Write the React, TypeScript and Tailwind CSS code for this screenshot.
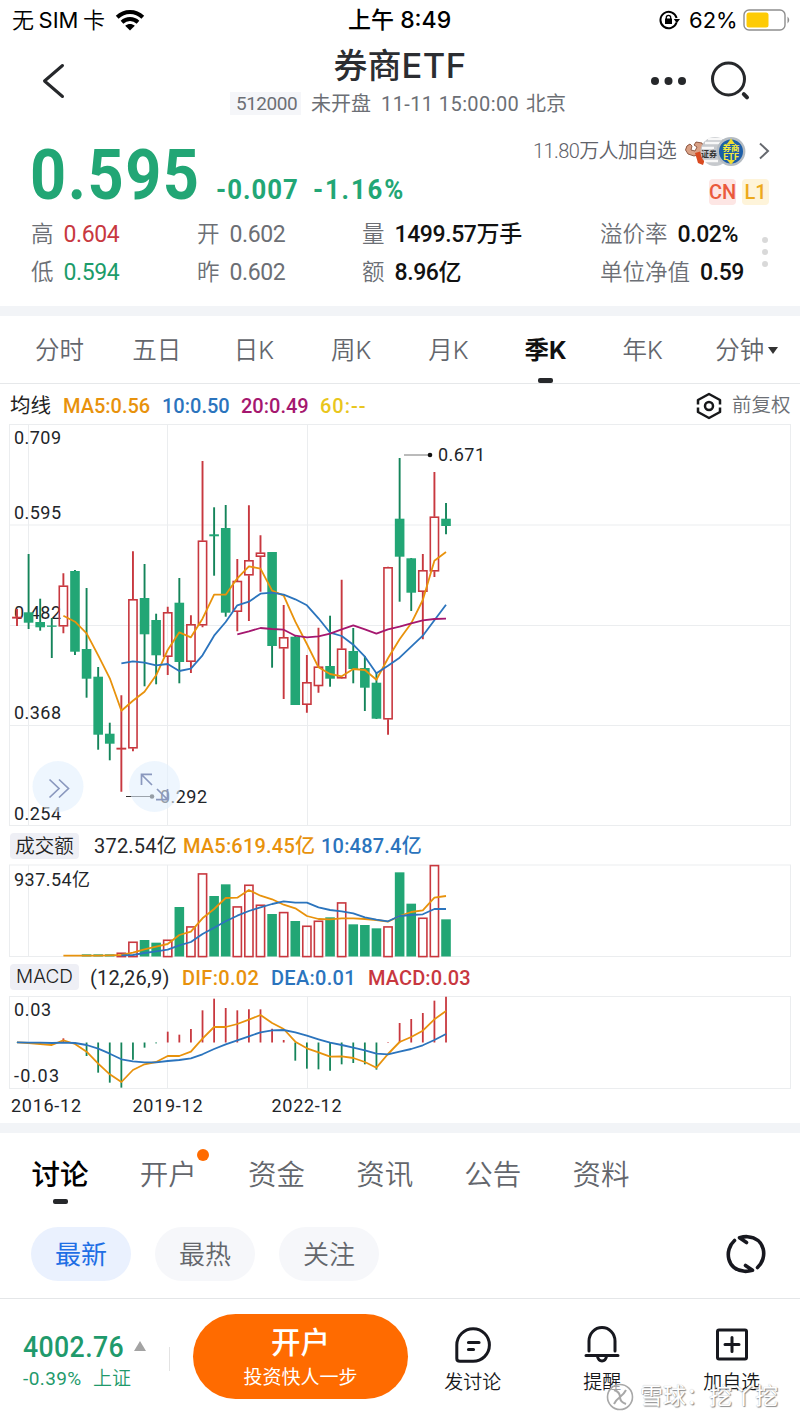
import type { ReactNode } from "react"

type Candle = [high: number, low: number, top: number, bottom: number, up: 0 | 1]

// high, low, body top, body bottom, up (red) or down (green)
const CANDLES: Candle[] = [
  [609, 626, 617, 618, 1], [554, 629, 612.3, 622.7, 0], [598.7, 630.7, 622, 627.3, 0], [618, 658, 625.5, 626.8, 0],
  [573.3, 633.3, 585.7, 626.3, 1], [570, 655, 571, 651.7, 0], [588, 697.7, 649, 678.7, 0], [667, 749.7, 676.7, 734.7, 0],
  [722.7, 760.3, 733.7, 743.7, 0], [695.3, 791.7, 748, 748.8, 1], [551.3, 751.3, 599.3, 748.3, 1], [564, 686.3, 598, 634.3, 0],
  [613.7, 684.3, 620, 655.3, 0], [606.7, 675, 612.3, 656.7, 1], [578, 683.3, 602.7, 662, 0], [615.3, 673, 624.3, 661.7, 1],
  [461, 627.3, 540.7, 625.3, 1], [507.3, 575.7, 534.3, 536.3, 0], [505, 616.7, 528, 612.7, 0], [559, 631.3, 581, 611.7, 1],
  [505.3, 621, 560.3, 575.3, 1], [535.3, 591.7, 552.7, 556.7, 1], [552, 667.7, 552, 646, 0], [605, 699, 637.3, 648.3, 1],
  [636, 705, 636.7, 705, 0], [655, 712.7, 682.3, 704.7, 1], [627.7, 692.7, 666.7, 686, 1], [615.7, 686.7, 666, 678.7, 0],
  [579.7, 678.7, 648.7, 678.3, 1], [628, 683.3, 651, 669, 0], [656, 711, 668, 687.7, 0], [672, 719, 682.7, 718.7, 0],
  [566.7, 734.7, 567.3, 719.3, 1], [458, 601.7, 518.7, 556.7, 0], [558, 611, 558.3, 592.7, 0], [554, 639.3, 570.3, 591.7, 1],
  [472, 577, 516.7, 571.3, 1], [503, 534.3, 518.7, 526, 0],
]

const MA5 = [587, 605, 640, 706, 775, 872, 842, 815, 766, 690, 637, 652, 596, 524, 524, 475, 439, 446, 512, 527, 605, 672, 742, 762, 769, 747, 750, 779, 715, 658, 610, 540, 422, 396]
const MA10 = [730, 724, 728, 736, 732, 753, 746, 706, 647, 606, 556, 545, 521, 518, 524, 538, 556, 595, 638, 648, 674, 710, 760, 737, 713, 680, 647, 601, 554]
const MA20 = [643, 634, 624, 627, 629, 647, 652, 649, 641, 628, 616, 628, 641, 628, 620, 610, 601, 597, 596]

const VOL = [373, 373, 373, 368, 335, 330, 338, 329, 231, 289, 130, 198, 163, 229, 164, 224, 252, 246, 273, 287, 272, 262, 217, 283, 285, 295, 289, 127, 221, 263, 105, 268]
const VOL5 = [377, 377, 377, 377, 376, 375, 368, 358, 350, 342, 315, 305, 265, 237, 204, 203, 180, 197, 208, 224, 235, 258, 267, 268, 265, 265, 267, 270, 275, 258, 246, 241, 203, 198]
const VOL10 = [376, 375, 369, 364, 359, 346, 336, 312, 293, 274, 257, 243, 232, 222, 214, 218, 218, 232, 240, 244, 250, 262, 269, 274, 258, 255, 253, 237, 237]

const HIST = [637, 637, 637, 637, 625, 637, 678, 728, 758, 773, 689, 653, 640, 605, 614, 597, 541, 506, 534, 541, 538, 538, 596, 630, 692, 716, 718, 722, 703, 699, 703, 719, 636, 579, 567, 549, 512, 500]
const DIF = [637, 639, 642, 645, 631, 642, 665, 701, 733, 756, 720, 703, 696, 678, 678, 665, 626, 591, 591, 582, 569, 555, 579, 597, 635, 655, 667, 680, 679, 684, 696, 713, 672, 636, 621, 602, 568, 543]
const DEA = [637, 638, 638, 639, 638, 639, 645, 656, 671, 688, 694, 697, 697, 693, 690, 685, 673, 657, 643, 631, 619, 607, 601, 600, 607, 617, 628, 638, 645, 653, 661, 671, 673, 665, 657, 646, 630, 612]

const RED = "#c8383f"
const GREEN = "#22a675"
const GREEN_DARK = "#14845a"
const ORANGE = "#e8920c"
const BLUE = "#2b74bd"
const PURPLE = "#a5176f"
const GRID = "#ebedef"

const px = (i: number) => 17 + i * 11.595
const line = (data: number[], start: number, base: number) =>
  data.map((v, i) => `${px(i + start).toFixed(1)},${(base + v / 3).toFixed(1)}`).join(" ")

function Line({ data, start, base, color }: { data: number[]; start: number; base: number; color: string }) {
  return <polyline points={line(data, start, base)} fill="none" stroke={color} strokeWidth={1.8} strokeLinejoin="round" />
}

function Frame({ top, bottom, rows = [] }: { top: number; bottom: number; rows?: number[] }) {
  return (
    <g stroke={GRID} fill="none">
      <rect x={9.5} y={top} width={781} height={bottom - top} />
      {rows.map((y) => <path key={y} d={`M9.5 ${y}H790.5`} />)}
      {[28.5, 167.5, 307.5].map((x) => <path key={x} d={`M${x} ${top}V${bottom}`} />)}
    </g>
  )
}

function Label({ x, y, w, children }: { x: number; y: number; w: number; children: ReactNode }) {
  return (
    <text x={x} y={y} textLength={w} lengthAdjust="spacing" fontSize={18} fill="#222529" className="font-[Roboto,'Noto_Sans_CJK_SC',sans-serif]">
      {children}
    </text>
  )
}

function PriceChart() {
  return (
    <svg className="block" width={800} height={406} viewBox="0 422 800 406">
      <Frame top={424.5} bottom={825.5} rows={[525, 625.5, 725.5]} />
      <Label x={14} y={444} w={47}>0.709</Label>
      <Label x={14} y={519} w={47}>0.595</Label>
      <Label x={14} y={619} w={47}>0.482</Label>
      <Label x={14} y={719} w={47}>0.368</Label>
      <Label x={14} y={819.5} w={47}>0.254</Label>
      {CANDLES.map(([high, low, top, bottom, up], i) => (
        <g key={i}>
          {up ? (
            <>
              <path d={`M${px(i)} ${high}V${top}M${px(i)} ${bottom}V${low}`} stroke={RED} strokeWidth={1.9} />
              <rect x={px(i) - 4.1} y={top + 0.5} width={8.2} height={Math.max(bottom - top - 1, 0.3)} fill="none" stroke={RED} strokeWidth={1.6} />
            </>
          ) : (
            <>
              <path d={`M${px(i)} ${high}V${low}`} stroke={GREEN_DARK} strokeWidth={1.9} />
              <rect x={px(i) - 4.8} y={top} width={9.6} height={bottom - top} fill={GREEN} />
            </>
          )}
        </g>
      ))}
      <Line data={MA5} start={4} base={420} color={ORANGE} />
      <Line data={MA10} start={9} base={420} color={BLUE} />
      <Line data={MA20} start={19} base={420} color={PURPLE} />
      <path d="M404 455H430" stroke="#777" />
      <circle cx={430} cy={455} r={2.3} fill="#111" />
      <Label x={438} y={461} w={47}>0.671</Label>
      <path d="M126 796.5H152" stroke="#333" />
      <circle cx={152} cy={796.5} r={2.3} fill="#222" />
      <Label x={160} y={803} w={47}>0.292</Label>
      <circle cx={58} cy={786.5} r={25.5} fill="#e2f0fd" fillOpacity={0.6} />
      <circle cx={154.5} cy={786.5} r={25.5} fill="#e2f0fd" fillOpacity={0.6} />
      <g fill="none" stroke="#8a98be" strokeWidth={1.7}>
        <path d="M49.5 779.5L59 788.5L49.5 797.5M59 779.5L68.5 788.5L59 797.5" />
        <path d="M152 785L141.5 774.5M141.5 785V774.3H152M157 789L167.5 799.5M167.5 789V799.7H156" />
      </g>
    </svg>
  )
}

function VolumeChart() {
  return (
    <svg className="block" width={800} height={96} viewBox="0 862 800 96">
      <Frame top={865} bottom={956.5} />
      <Label x={14} y={886} w={76}>937.54亿</Label>
      {VOL.map((v, n) => {
        const i = n + 6
        const y = 830 + v / 3
        return CANDLES[i][4] ? (
          <rect key={i} x={px(i) - 4.1} y={y + 0.6} width={8.2} height={956 - y} fill="none" stroke={RED} strokeWidth={1.6} />
        ) : (
          <rect key={i} x={px(i) - 4.8} y={y} width={9.6} height={956.5 - y} fill={GREEN} />
        )
      })}
      <Line data={VOL5} start={4} base={830} color={ORANGE} />
      <Line data={VOL10} start={9} base={830} color={BLUE} />
    </svg>
  )
}

function MacdChart() {
  return (
    <svg className="block" width={800} height={129} viewBox="0 994 800 129">
      <Frame top={996.5} bottom={1088.5} />
      {HIST.map((v, i) => (
        <path key={i} d={`M${px(i)} 1042.5V${830 + v / 3}`} stroke={v < 637 ? RED : GREEN_DARK} strokeWidth={1.8} />
      ))}
      <Line data={DIF} start={0} base={830} color={ORANGE} />
      <Line data={DEA} start={0} base={830} color={BLUE} />
      <Label x={14} y={1016} w={37}>0.03</Label>
      <Label x={14} y={1082} w={45}>-0.03</Label>
      <Label x={11} y={1112} w={70}>2016-12</Label>
      <Label x={132.5} y={1112} w={70}>2019-12</Label>
      <Label x={271.5} y={1112} w={70}>2022-12</Label>
    </svg>
  )
}

function StatusBar() {
  return (
    <div className="flex h-10 items-center text-black">
      <div className="flex w-[348px] items-center pl-3 text-[22px]">
        <span className="flex w-[103px] font-[Inter,'Noto_Sans_CJK_SC',sans-serif] font-[350]">
          无<span className="w-[49px] text-center font-normal">SIM</span>卡
        </span>
        <svg width={30} height={22} viewBox="0 0 30 22" fill="none" stroke="#000" strokeWidth={4}>
          <path d="M2.2 8.3C9.5 1.2 20.5 1.2 27.8 8.3" />
          <path d="M7 13.2C11.6 9 18.4 9 23 13.2" />
          <path d="M15 21.5L10.2 16.7C13 14.3 17 14.3 19.8 16.7Z" fill="#000" stroke="none" />
        </svg>
      </div>
      <div className="w-[311px] font-[Inter,'Noto_Sans_CJK_SC',sans-serif] text-[23px] font-medium">上午 8:49</div>
      <svg width={21} height={20} viewBox="0 0 21 20" fill="none" stroke="#000" strokeWidth={2}>
        <path d="M17.5 12.5A8.2 8.2 0 1 1 17.6 8" />
        <path d="M14.8 9H21L17.8 13.2Z" fill="#000" stroke="none" />
        <rect x={6} y={8.5} width={7} height={5.5} fill="#000" stroke="none" />
        <path d="M7.3 9V7.6A2.2 2.2 0 0 1 11.7 7.6V9" strokeWidth={1.3} />
      </svg>
      <span className="ml-[9px] w-[54px] font-[Inter,sans-serif] text-[22px]">62%</span>
      <svg width={48} height={22} viewBox="0 0 48 22">
        <rect x={1} y={1} width={41} height={20} rx={5} fill="none" stroke="#8e8e8e" strokeWidth={1.4} />
        <rect x={3.5} y={3.5} width={22} height={15} rx={2.5} fill="#fecb05" />
        <path d="M44.5 7.5Q48 11 44.5 14.5Z" fill="#8e8e8e" />
      </svg>
    </div>
  )
}

function Header() {
  return (
    <div className="flex h-[82px] text-[#2b2d31]">
      <svg className="mt-[22px] ml-[40px] w-[190px]" width={190} height={40} viewBox="40 62 190 40" fill="none" stroke="#26282b" strokeWidth={3} strokeLinecap="round" strokeLinejoin="round">
        <path d="M62.5 65.5L44.5 81L62.5 96.5" />
      </svg>
      <div className="w-[340px] text-center">
        <h1 className="h-[52px] pt-0.5 text-[34px] leading-[48px] font-medium">
          券商<span className="font-[Inter,sans-serif] text-[34.5px] tracking-[0.5px]">ETF</span>
        </h1>
        <div className="flex h-[23px] items-center text-[20px] leading-none text-[#6c6f75]">
          <span className="h-[23px] w-[71px] bg-[#f5f6f9] pl-[6px] text-left text-[19px] leading-[24px] tracking-[-0.5px]">512000</span>
          <span className="w-[70px] pl-[10px] text-left">未开盘</span>
          <span className="w-[145px] pl-[10px] text-left whitespace-nowrap tracking-[0.4px]">11-11 15:00:00</span>
          <span className="pl-[10px]">北京</span>
        </div>
      </div>
      <svg className="mt-[18px] ml-[78px]" width={110} height={46} viewBox="648 58 110 46" fill="none" stroke="#26282b">
        <g fill="#26282b" stroke="none">
          <circle cx={655} cy={81} r={4} />
          <circle cx={668.5} cy={81} r={4} />
          <circle cx={682} cy={81} r={4} />
        </g>
        <circle cx={728.5} cy={79} r={16} strokeWidth={3} />
        <path d="M743.8 94.2L747 97.4" strokeWidth={4} strokeLinecap="round" />
      </svg>
    </div>
  )
}

function Avatars() {
  return (
    <svg className="ml-[9px]" width={61} height={30} viewBox="685 135 61 30">
      <path d="M685.5 149Q686 144 690 143L692 145L691 149L695 150L697 146L694 144L696 141L702 142L704 148L701 153L694 155L688 153Z" fill="#d9a186" stroke="#7a3f28" strokeWidth={0.8} />
      <path d="M695 152L702 150L705 158L703 164L698 162Z" fill="#d94a20" />
      <circle cx={715} cy={150.5} r={14.5} fill="#c6c9cd" />
      <path d="M705 142H721M702 147H714M708 138H722M704 160H718" stroke="#f8f8f8" strokeWidth={2.5} />
      <text x={701} y={156} fontSize={8} fontWeight={700} fill="#333" className="font-['Noto_Sans_CJK_SC',sans-serif]">证券</text>
      <circle cx={731} cy={150.5} r={13.2} fill="#1c5ea8" stroke="#b5bcc2" strokeWidth={2.4} />
      <path d="M731 137.5L735 143H727ZM731 163.5L735 159H727Z" fill="#f0dc30" />
      <text x={731} y={150} fontSize={8.5} fontWeight={700} textAnchor="middle" fill="#f7ea3a" className="font-['Noto_Sans_CJK_SC',sans-serif]">券商</text>
      <text x={731} y={158.5} fontSize={9} fontWeight={700} textAnchor="middle" fill="#f7ea3a" className="font-[Roboto,sans-serif]">ETF</text>
    </svg>
  )
}

function Stat({ label, value, className = "text-[#6c6f75]" }: { label: string; value: string; className?: string }) {
  return (
    <div className="flex h-[38px] items-center whitespace-nowrap">
      <span className="mr-[10px] text-[22.5px] font-[350] text-[#6c6f75]">{label}</span>
      <span className={`text-[23px] tracking-[-0.4px] ${className}`}>{value}</span>
    </div>
  )
}

function Quote() {
  return (
    <div className="h-[184px]">
      <div className="flex h-[94px] justify-between">
        <div className="flex items-baseline pl-[30px] font-bold text-[#22a675]">
          <span className="w-[186px] leading-[106px]">
            <span className="inline-block origin-left scale-x-[.9] text-[70px] tracking-[1.7px]">0.595</span>
          </span>
          <span className="w-[97px]">
            <span className="inline-block origin-left scale-x-[.92] text-[28px] tracking-[1.1px]">-0.007</span>
          </span>
          <span className="w-[93px]">
            <span className="inline-block origin-left scale-x-[.92] text-[28px] tracking-[2px]">-1.16%</span>
          </span>
        </div>
        <div className="flex w-[270px] flex-col items-start">
          <div className="flex h-[58px] items-center pl-[3px]">
            <span className="w-[143px] text-[20px] font-[350] tracking-[-0.6px] whitespace-nowrap text-[#5f6269]">11.80万人加自选</span>
            <Avatars />
            <svg className="ml-[13px]" width={12} height={18} viewBox="0 0 12 18" fill="none" stroke="#66696f" strokeWidth={2}>
              <path d="M1 1.5L9 9L1 16.5" />
            </svg>
          </div>
          <div className="-mt-px flex gap-[6px] pl-[179px] text-[20px] leading-[27px] font-medium">
            <span className="h-[26px] w-[27px] rounded bg-[#fde6e4] text-center text-[#ea5a3c]">CN</span>
            <span className="h-[26px] w-[27px] rounded bg-[#fef4da] text-center text-[#eda91c]">L1</span>
          </div>
        </div>
      </div>
      <div className="flex pl-[31px]">
        <div className="w-[166px]">
          <Stat label="高" value="0.604" className="text-[#c8383f]" />
          <Stat label="低" value="0.594" className="text-[#1c9c6a]" />
        </div>
        <div className="w-[165px]">
          <Stat label="开" value="0.602" />
          <Stat label="昨" value="0.602" />
        </div>
        <div className="w-[238px]">
          <Stat label="量" value="1499.57万手" className="font-medium text-[#111]" />
          <Stat label="额" value="8.96亿" className="font-medium text-[#111]" />
        </div>
        <div className="w-[162px]">
          <Stat label="溢价率" value="0.02%" className="font-medium text-[#111]" />
          <Stat label="单位净值" value="0.59" className="font-medium text-[#111]" />
        </div>
        <div className="flex flex-col gap-[6px] pt-[21px]">
          <i className="size-1.5 rounded-full bg-[#d9d9d9]" />
          <i className="size-1.5 rounded-full bg-[#d9d9d9]" />
          <i className="size-1.5 rounded-full bg-[#d9d9d9]" />
        </div>
      </div>
    </div>
  )
}

const PERIODS = ["分时", "五日", "日K", "周K", "月K", "季K", "年K"]

function PeriodTabs() {
  return (
    <div className="flex h-[68px] border-b border-[#e6e8ea] pl-[11px] font-[Inter,'Noto_Sans_CJK_SC',sans-serif] text-[24.5px] font-[350] text-[#63666c]">
      {PERIODS.map((name) => (
        <div key={name} className="flex w-[97.2px] flex-col items-center">
          <span className={name === "季K" ? "h-[62px] leading-[69px] font-bold text-[#111]" : "h-[62px] leading-[69px]"}>{name}</span>
          {name === "季K" && <i className="h-[5px] w-[15px] rounded-[2px] bg-[#26282b]" />}
        </div>
      ))}
      <div className="flex items-center pt-0.5 pl-[24px]">
        <span>分钟</span>
        <svg className="ml-1" width={10} height={7}><path d="M0 0H10L5 7Z" fill="#333" /></svg>
      </div>
    </div>
  )
}

function MaRow() {
  return (
    <div className="flex h-[38px] items-center pt-[6px] pl-[10px] text-[20px] font-medium whitespace-nowrap">
      <span className="w-[53px] text-[20.5px] font-normal text-[#222]">均线</span>
      <span className="w-[99px] text-[#e8920c]">MA5:0.56</span>
      <span className="w-[79px] text-[#2b74bd]">10:0.50</span>
      <span className="w-[79px] text-[#a5176f]">20:0.49</span>
      <span className="w-[376px] tracking-[1px] text-[#e9c61d]">60:--</span>
      <svg width={26} height={28} viewBox="0 0 26 28" fill="none" stroke="#17181a" strokeWidth={2.5} strokeLinejoin="round">
        <path d="M2 12.5V8L13 2L24 8V12.5M2 15.5V20L13 26L24 20V15.5" />
        <circle cx={13} cy={14} r={4} />
      </svg>
      <span className="pl-[10px] text-[19.5px] font-[350] text-[#6c6f75]">前复权</span>
    </div>
  )
}

function VolumeRow() {
  return (
    <div className="flex h-[34px] items-center pt-[2px] pl-[10px] text-[20px] whitespace-nowrap">
      <span className="-mt-px mr-[15px] h-[26px] w-[69px] rounded bg-[#eeeff5] text-center text-[19.5px] leading-[27px] font-[350] text-[#222]">成交额</span>
      <span className="w-[89px] tracking-[0.2px] text-[#26282b]">372.54亿</span>
      <span className="w-[138px] font-medium tracking-[0.2px] text-[#e8920c]">MA5:619.45亿</span>
      <span className="font-medium tracking-[0.2px] text-[#2b74bd]">10:487.4亿</span>
    </div>
  )
}

function MacdRow() {
  return (
    <div className="flex h-[36px] items-center pt-[3px] pl-[10px] text-[20px] font-medium whitespace-nowrap">
      <span className="-mt-px mr-[11px] h-[26px] w-[69px] rounded bg-[#eeeff5] text-center font-[Inter,sans-serif] text-[19px] leading-[26px] font-[350] text-[#222]">MACD</span>
      <span className="w-[92px] font-normal tracking-[0.2px] text-[#26282b]">(12,26,9)</span>
      <span className="w-[89px] tracking-[0.3px] text-[#e8920c]">DIF:0.02</span>
      <span className="w-[97px] tracking-[0.3px] text-[#2b74bd]">DEA:0.01</span>
      <span className="tracking-[0.1px] text-[#c8383f]">MACD:0.03</span>
    </div>
  )
}

const SECTIONS = ["讨论", "开户", "资金", "资讯", "公告", "资料"]

function SectionTabs() {
  return (
    <div className="flex h-[94px] pl-[6px] text-[28.5px] font-[350] text-[#63666c]">
      {SECTIONS.map((name, i) => (
        <div key={name} className="relative flex w-[108.2px] flex-col items-center">
          <span className={i === 0 ? "h-[66px] leading-[85px] font-medium text-black" : "h-[66px] leading-[85px]"}>{name}</span>
          {i === 0 && <i className="h-[5px] w-[15px] rounded-[2px] bg-[#26282b]" />}
          {i === 1 && <i className="absolute top-4 left-[83px] size-3 rounded-full bg-[#ff6b00]" />}
        </div>
      ))}
    </div>
  )
}

function Filters() {
  return (
    <div className="flex h-[72px] items-start gap-6 border-b border-[#e4e6e8] pl-[31px] text-[26px] leading-[57px] text-[#63666c]">
      <span className="h-[54px] w-[100px] rounded-full bg-[#eaf1fe] text-center text-[#1f6fe5]">最新</span>
      <span className="h-[54px] w-[100px] rounded-full bg-[#f6f7fa] text-center font-[350]">最热</span>
      <span className="h-[54px] w-[100px] rounded-full bg-[#f6f7fa] text-center font-[350]">关注</span>
      <svg className="mt-[7px] ml-[322px]" width={42} height={40} viewBox="0 0 42 40" fill="none" stroke="#17181f" strokeWidth={3.6} strokeLinecap="round" strokeLinejoin="round">
        <path d="M9.5 6.5C-1 16 1.5 36 19.5 37.3Q23 37.5 27.5 36.3L20.5 31.5" />
        <path d="M32.5 33.5C43 24 40.5 4 22.5 2.7Q19 2.5 14.5 3.7L21.5 8.5" />
      </svg>
    </div>
  )
}

function Action({ label, children }: { label: string; children: ReactNode }) {
  return (
    <div className="flex w-[129.5px] flex-col items-center pt-[27px] text-[19px] leading-[28px] font-[350] text-[#17181a]">
      <svg width={38} height={38} viewBox="0 0 38 38" fill="none" stroke="#17181f" strokeWidth={3} strokeLinecap="round" strokeLinejoin="round">
        {children}
      </svg>
      <span className="mt-[5px]">{label}</span>
    </div>
  )
}

function BottomBar() {
  return (
    <div className="relative flex h-[123px]">
      <div className="w-[169px] pt-[31px] pl-[23px] text-[#1f9a6c]">
        <div className="flex h-[36px] items-center">
          <span className="w-[111px]">
            <span className="inline-block origin-left scale-x-[.92] text-[29px] font-medium tracking-[0.4px]">4002.76</span>
          </span>
          <svg className="-mt-1" width={12} height={10}><path d="M0 10L6 0L12 10Z" fill="#a3a3a3" /></svg>
        </div>
        <div className="flex h-[26px] items-center gap-2 text-[19px]">
          <span className="w-[62px] tracking-[0.4px]">-0.39%</span>
          <span className="font-[350]">上证</span>
        </div>
      </div>
      <div className="mt-[48px] mr-[23px] h-6 w-px bg-[#e3e3e3]" />
      <button className="mt-[15px] flex h-[85px] w-[215px] flex-col items-center rounded-full bg-[#ff6b00] text-white">
        <span className="mt-[10px] text-[29.5px] leading-[38px] font-medium">开户</span>
        <span className="mt-[3px] text-[19px] leading-[26px]">投资快人一步</span>
      </button>
      <Action label="发讨论">
        <path d="M2.8 19A16.3 16.3 0 1 1 19 35.3H6Q2.8 35.3 2.8 32.5Z" />
        <path d="M14.5 16.5H25M14.5 23.5H19.500" strokeWidth={3.2} />
      </Action>
      <Action label="提醒">
        <path d="M6 25V15A13 13.5 0 0 1 32 15V25" />
        <path d="M3 29.5H35M14.5 30.5Q15.5 35 19 35T23.5 30.5" />
      </Action>
      <Action label="加自选">
        <rect x={4.5} y={4} width={29} height={29} rx={1.5} />
        <path d="M19 11.5V25.5M12 18.5H26" />
      </Action>
      <div className="absolute top-[83px] left-[606px] flex items-center gap-[6px] text-[23px] leading-[30px] font-normal whitespace-nowrap text-white [text-shadow:1px_1px_1px_#8a8a8a,0_0_1px_#b5b5b5]">
        <svg width={28} height={28} viewBox="0 0 28 28" fill="none" stroke="#a8a8a8" strokeWidth={1.6}>
          <circle cx={14} cy={14} r={12.5} fill="#fff" fillOpacity={0.6} />
          <path d="M8 7Q14 9 14 14T20 21M20 7Q18 11 14 14T8 21" strokeWidth={2} />
        </svg>
        <span>雪球：挖丫挖</span>
      </div>
    </div>
  )
}

export default function App() {
  return (
    <div className="h-[1422px] w-[800px] overflow-hidden bg-white font-[Roboto,'Noto_Sans_CJK_SC',sans-serif]">
      <StatusBar />
      <Header />
      <Quote />
      <div className="h-[10px] bg-[#f2f4f7]" />
      <PeriodTabs />
      <MaRow />
      <PriceChart />
      <VolumeRow />
      <VolumeChart />
      <MacdRow />
      <MacdChart />
      <div className="h-[10px] bg-[#f2f4f7]" />
      <SectionTabs />
      <Filters />
      <BottomBar />
    </div>
  )
}
